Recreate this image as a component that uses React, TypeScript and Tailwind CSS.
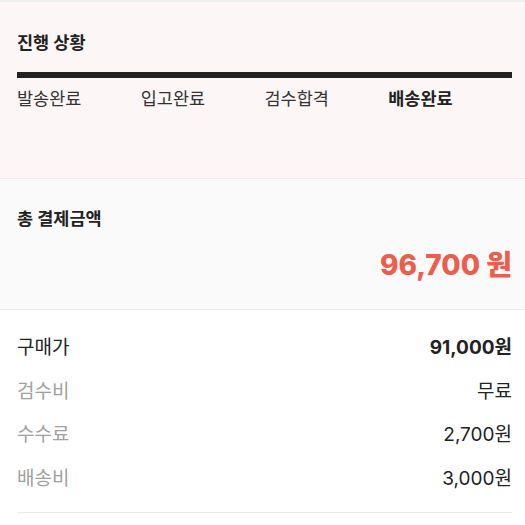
export default function App() {
  const font = { fontFamily: "Inter, 'Noto Sans CJK KR', sans-serif" };
  const steps = ["발송완료", "입고완료", "검수합격", "배송완료"];
  const rows = [
    { label: "구매가", value: "91,000원", strong: true },
    { label: "검수비", value: "무료", strong: false },
    { label: "수수료", value: "2,700원", strong: false },
    { label: "배송비", value: "3,000원", strong: false },
  ];
  return (
    <div className="w-[525px] h-[525px] overflow-hidden bg-white text-[#222]" style={font}>
      <div className="border-t-2 border-[#efefef] bg-[#fcf6f6] px-[13px] pl-[17px] pt-[29px] pb-[67px] border-b border-b-[#ececec]">
        <div className="text-[17.5px] leading-[24px] font-bold">진행 상황</div>
        <div className="mt-[17px] h-[6px] bg-[#222]" />
        <div className="mt-[9px] grid grid-cols-4">
          {steps.map((s, i) => (
            <div
              key={s}
              className={`text-[17.5px] leading-[24px] ${i === 3 ? "font-bold text-[#222]" : "text-[#333]"}`}
            >
              {s}
            </div>
          ))}
        </div>
      </div>
      <div className="bg-[#fafafa] px-[13px] pl-[17px] pt-[28px] pb-[26px] border-b border-[#ebebeb]">
        <div className="text-[17.5px] leading-[24px] font-bold">총 결제금액</div>
        <div className="mt-[16px] flex justify-end text-[28px] leading-[36px] font-extrabold text-[#ec5d4b]">
          96,700 원
        </div>
      </div>
      <div className="px-[13px] pl-[17px] pt-[24px]">
        <div className="flex flex-col gap-[15.5px]">
          {rows.map((r, i) => (
            <div key={r.label} className="flex justify-between text-[19px] leading-[28px]">
              <span className={i === 0 ? "text-[#222]" : "text-[#a0a0a0]"}>{r.label}</span>
              <span className={r.strong ? "font-bold text-[#222]" : "text-[#222]"}>{r.value}</span>
            </div>
          ))}
        </div>
        <div className="mt-[19px] h-px bg-[#ebebeb]" />
      </div>
    </div>
  );
}
